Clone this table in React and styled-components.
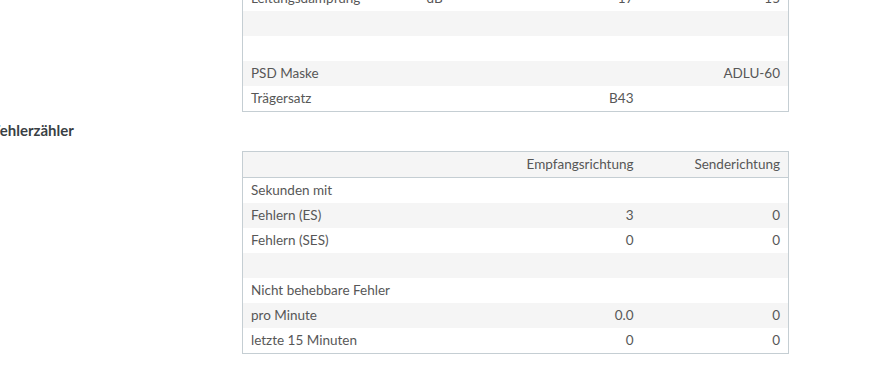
import React from "react";
import styled, { createGlobalStyle } from "styled-components";

const Global = createGlobalStyle`
  html, body { margin: 0; padding: 0; background: #fff; overflow: hidden; }
  body { font-family: Lato, "Open Sans", sans-serif; }
`;

const Page = styled.div`
  margin: -15px 0 0 -8px;
  width: 900px;
`;

const Heading = styled.h3`
  margin: 0;
  height: 39px;
  line-height: 36px;
  font-size: 15px;
  font-weight: 700;
  color: #3a3f44;
`;

const TableWrap = styled.div`
  margin-left: 250px;
  width: 547px;
`;

const Table = styled.table`
  width: 100%;
  border-collapse: collapse;
  table-layout: fixed;
  border: 1px solid #c5ced3;
  font-size: 13.5px;
  color: #575757;
`;

const Row = styled.tr`
  background: ${(p) => (p.$striped ? "#f5f5f5" : "#fff")};
`;

const HeadRow = styled.tr`
  background: #f5f5f5;
  border-bottom: 1px solid #c5ced3;
`;

const Cell = styled.td`
  height: 25px;
  padding: 0 8px;
  line-height: 25px;
  text-align: ${(p) => (p.$right ? "right" : "left")};
  white-space: nowrap;
  vertical-align: middle;
`;

const HeadCell = styled.th`
  height: 25px;
  padding: 0 8px;
  line-height: 25px;
  font-weight: 400;
  text-align: ${(p) => (p.$right ? "right" : "left")};
  white-space: nowrap;
`;

const t1 = [
  ["Leitungsdämpfung", "dB", "17", "15"],
  ["", "", "", ""],
  ["", "", "", ""],
  ["PSD Maske", "", "", "ADLU-60"],
  ["Trägersatz", "", "B43", ""],
];

const t2 = [
  ["Sekunden mit", "", ""],
  ["Fehlern (ES)", "3", "0"],
  ["Fehlern (SES)", "0", "0"],
  ["", "", ""],
  ["Nicht behebbare Fehler", "", ""],
  ["pro Minute", "0.0", "0"],
  ["letzte 15 Minuten", "0", "0"],
];

export default function App() {
  return (
    <>
      <Global />
      <Page>
        <TableWrap>
          <Table>
            <colgroup>
              <col style={{ width: 176 }} />
              <col style={{ width: 100 }} />
              <col />
              <col style={{ width: 147 }} />
            </colgroup>
            <tbody>
              {t1.map((r, i) => (
                <Row key={i} $striped={i % 2 === 1}>
                  <Cell>{r[0]}</Cell>
                  <Cell>{r[1]}</Cell>
                  <Cell $right>{r[2]}</Cell>
                  <Cell $right>{r[3]}</Cell>
                </Row>
              ))}
            </tbody>
          </Table>
        </TableWrap>
        <Heading>Fehlerzähler</Heading>
        <TableWrap>
          <Table>
            <colgroup>
              <col />
              <col style={{ width: 200 }} />
              <col style={{ width: 147 }} />
            </colgroup>
            <thead>
              <HeadRow>
                <HeadCell />
                <HeadCell $right>Empfangsrichtung</HeadCell>
                <HeadCell $right>Senderichtung</HeadCell>
              </HeadRow>
            </thead>
            <tbody>
              {t2.map((r, i) => (
                <Row key={i} $striped={i % 2 === 1}>
                  <Cell>{r[0]}</Cell>
                  <Cell $right>{r[1]}</Cell>
                  <Cell $right>{r[2]}</Cell>
                </Row>
              ))}
            </tbody>
          </Table>
        </TableWrap>
      </Page>
    </>
  );
}
